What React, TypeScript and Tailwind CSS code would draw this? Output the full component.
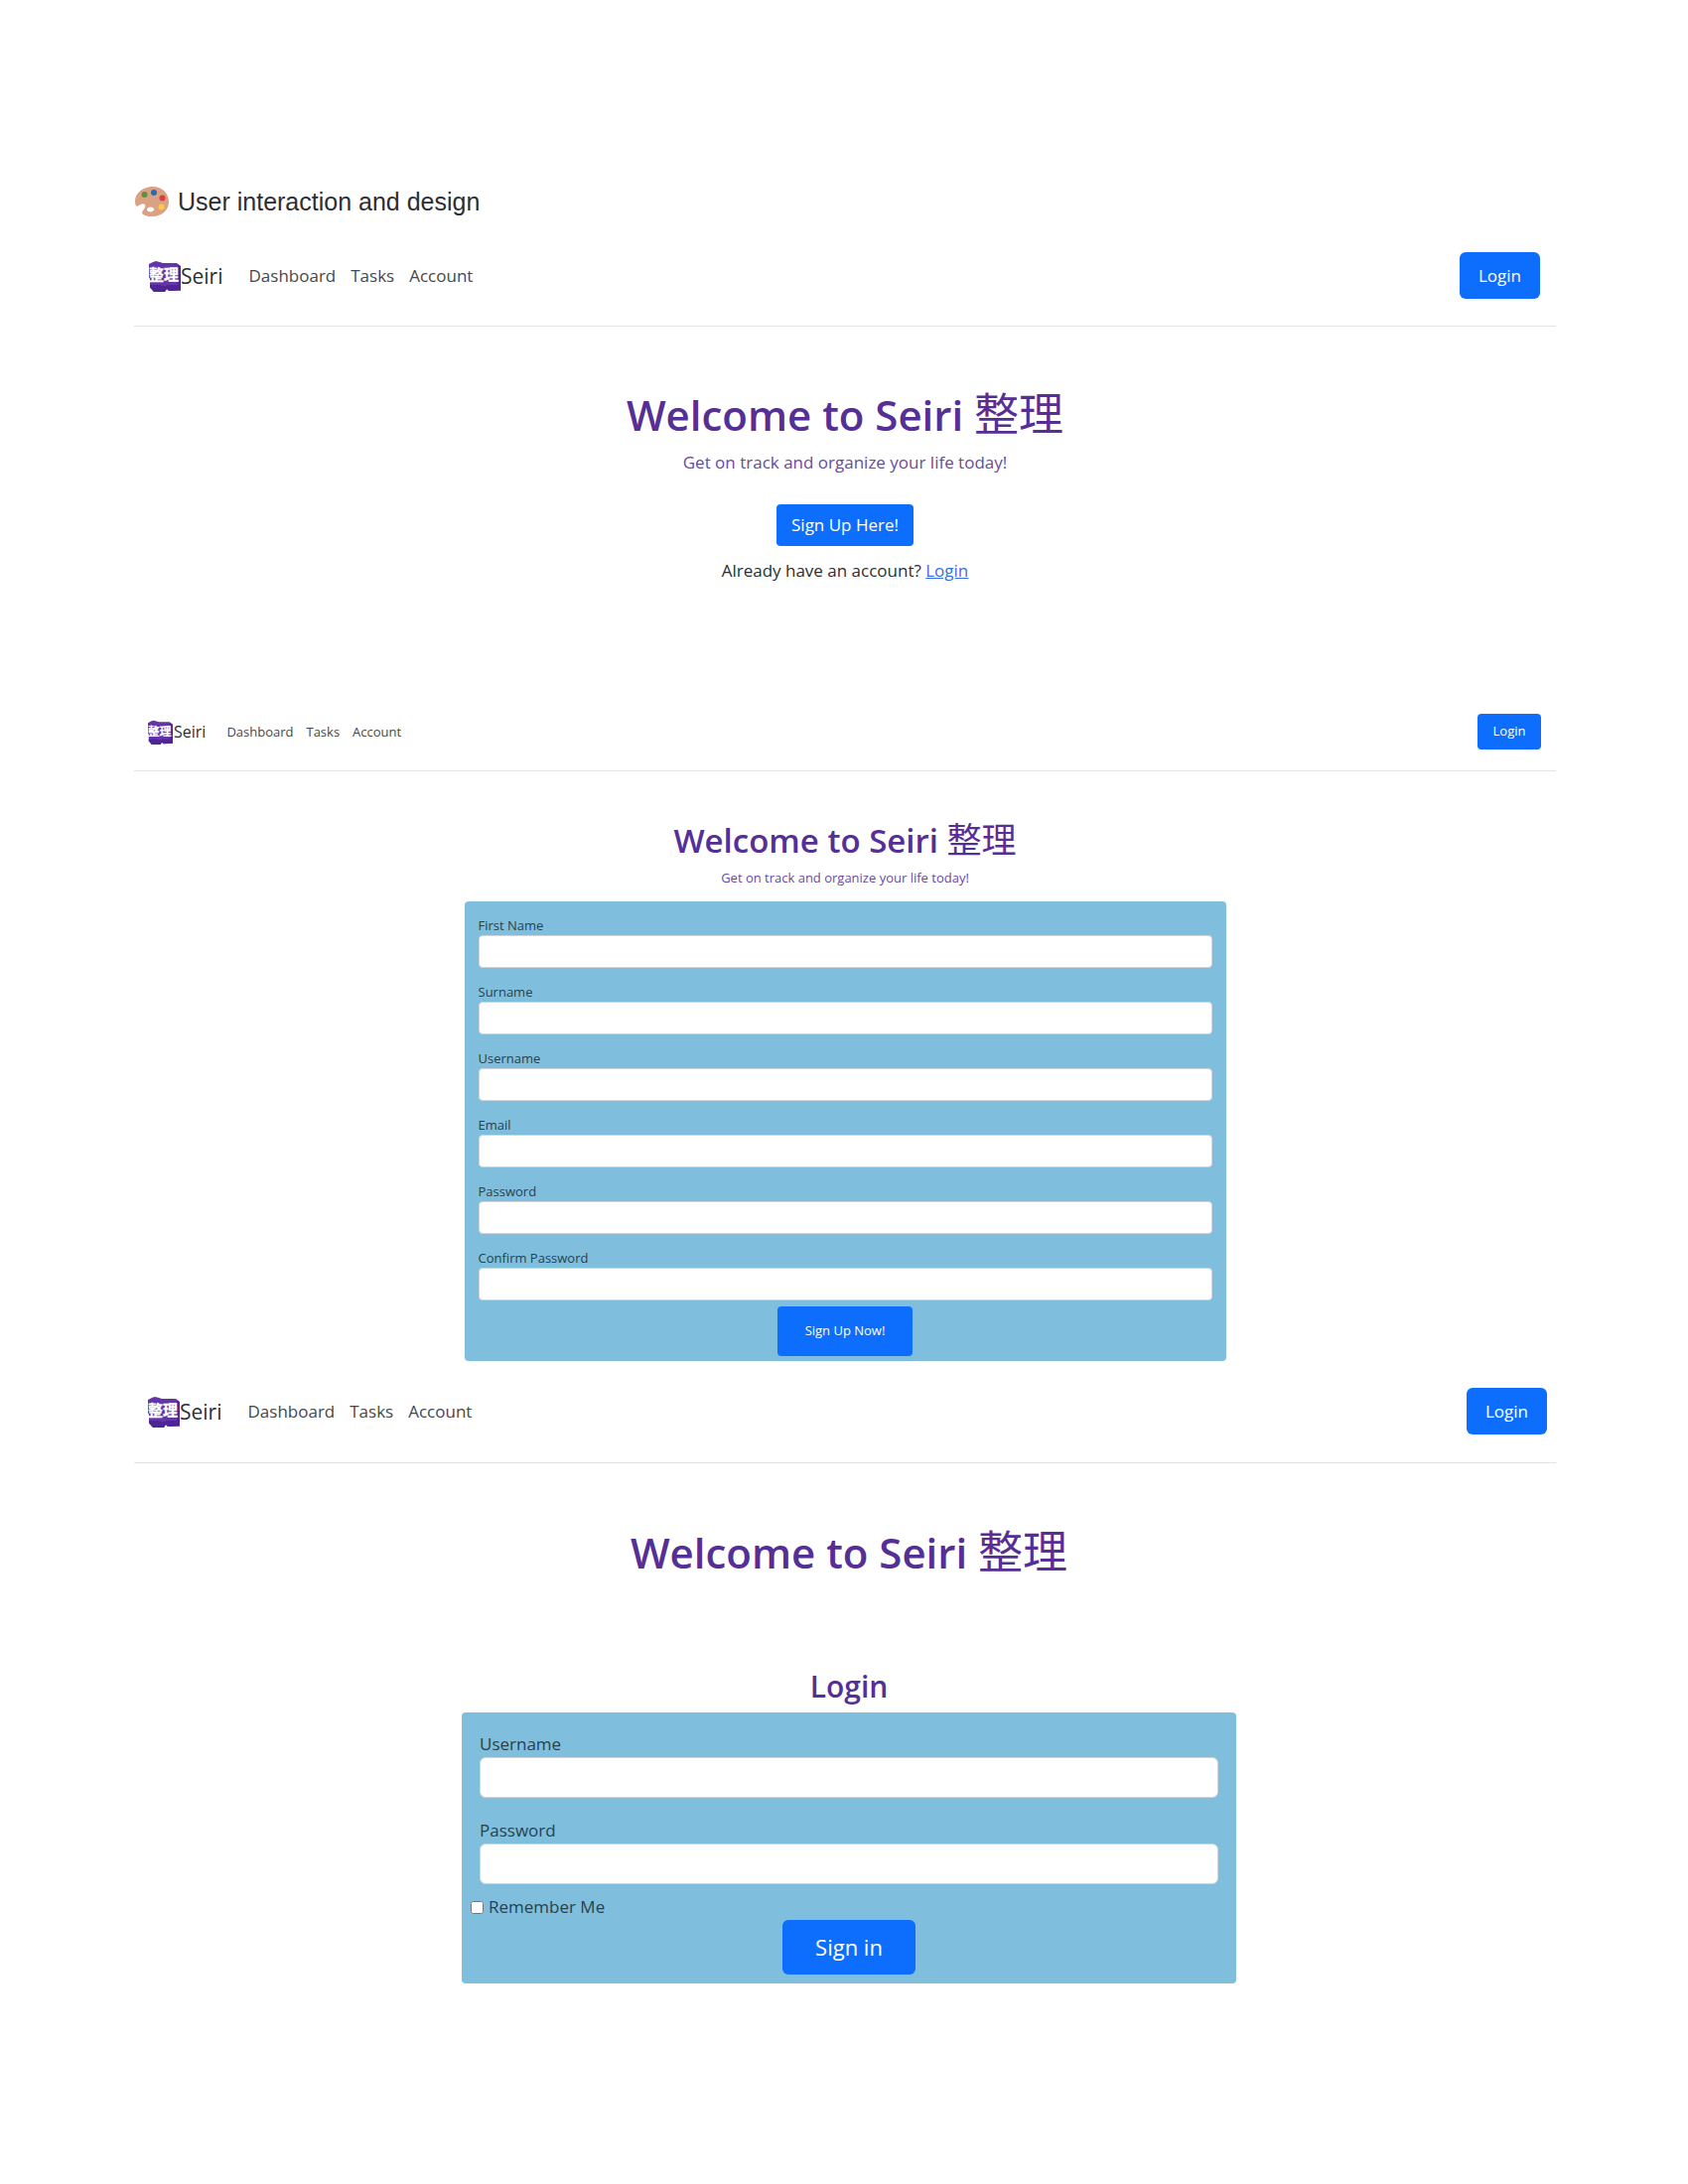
import React from "react";

function Palette() {
  return (
    <svg viewBox="0 0 36 32" className="h-8 w-9 shrink-0" aria-hidden="true">
      <path
        d="M19 1C9 1 1 7.500 1 15.500c0 2.500.6 5 1.700 5.200 1.600.3 3.600-2.600 6.300-2.400 2.600.2 2.900 2.500 1.600 4.500-1.200 1.900-3.100 3.700-2.300 5.100 1.200 2.100 5.900 3.100 10.200 3.100C28.300 31 35 24.500 35 16.300 35 7.500 28 1 19 1zm-2.500 25.400c-2.100 0-3.500-1-3.500-2.400s1.500-2.600 3.600-2.600 3.500 1 3.500 2.400-1.500 2.600-3.600 2.600z"
        fill="#dba183"
      />
      <circle cx="10.500" cy="9" r="3" fill="#5f9140" />
      <circle cx="20" cy="7" r="3" fill="#2e68ad" />
      <circle cx="28.500" cy="12.500" r="3" fill="#dd3b4a" />
      <circle cx="27.500" cy="21.500" r="3" fill="#fbc74d" />
    </svg>
  );
}

function Logo({ className }: { className: string }) {
  return (
    <svg viewBox="0 0 32 32" className={className} role="img" aria-label="整理">
      <path d="M0 4 4 2l3-1 4 1 3 1h14l4 3v24.500L20 31l-2-2-2 3H5l-4-4.500V19L0 17z" fill="#6236a8" />
      <path d="M1 25h11v1h6v-1h11V4.500l3 2v24L20 31l-2-2-2 3H5l-4-4.500z" fill="#4f2496" />
      <text
        x="0"
        y="20"
        fontSize="15"
        fontWeight="700"
        fill="#ffffff"
        stroke="#ffffff"
        strokeWidth="0.300"
        fontFamily="'Noto Sans CJK JP', sans-serif"
      >
        整理
      </text>
    </svg>
  );
}

function NavBar({ small = false, className }: { small?: boolean; className: string }) {
  return (
    <header className={`flex items-start justify-between border-b border-[#e2e3e5] ${className}`}>
      <nav className={small ? "flex h-[36px] items-center" : "flex h-[48px] items-center"}>
        <a href="#" className="flex items-center">
          <Logo className={small ? "size-[25px]" : "size-8"} />
          <span className={small ? "ml-px text-[16px] leading-6" : "text-[21px] leading-7"}>Seiri</span>
        </a>
        <div
          className={
            small
              ? "ml-[21px] flex gap-[13px] text-[13px] leading-5 text-[#44484c]"
              : "ml-[26px] flex gap-[15px] text-[17px] leading-6 text-[#44484c]"
          }
        >
          <a href="#">Dashboard</a>
          <a href="#">Tasks</a>
          <a href="#">Account</a>
        </div>
      </nav>
      <button
        type="button"
        className={
          small
            ? "h-[36px] w-16 rounded bg-[#0d6efd] text-[13px] text-white"
            : "h-[47px] w-[81px] rounded-md bg-[#0d6efd] text-[17px] text-white"
        }
      >
        Login
      </button>
    </header>
  );
}

function Title({ small = false }: { small?: boolean }) {
  return (
    <h1
      className={
        small
          ? "text-center text-[33px] leading-[44px] font-semibold text-[#552f95]"
          : "text-center text-[42px] leading-[56px] font-semibold text-[#552f95]"
      }
    >
      Welcome to Seiri{" "}
      <span className={small ? "text-[35px] leading-none font-normal" : "text-[45px] leading-none font-normal"}>
        整理
      </span>
    </h1>
  );
}

const signUpFields = [
  { id: "first-name", label: "First Name", type: "text" },
  { id: "surname", label: "Surname", type: "text" },
  { id: "username", label: "Username", type: "text" },
  { id: "email", label: "Email", type: "email" },
  { id: "password", label: "Password", type: "password" },
  { id: "confirm-password", label: "Confirm Password", type: "password" },
];

const loginFields = [
  { id: "login-username", label: "Username", type: "text" },
  { id: "login-password", label: "Password", type: "password" },
];

export default function App() {
  return (
    <main className="min-h-screen bg-white pt-[185px] pr-[133px] pb-16 pl-[135px] font-['Open_Sans','Noto_Sans_CJK_JP',sans-serif] text-[#2b2f33]">
      <h3 className="flex h-9 items-center gap-2 font-['Liberation_Sans',sans-serif] text-[25px] leading-9">
        <Palette />
        <span>User interaction and design</span>
      </h3>

      <section className="mt-[33px]">
        <NavBar className="pr-4 pb-[26px] pl-[15px]" />
        <div className="mt-[61px] flex flex-col items-center">
          <Title />
          <p className="mt-2 text-[17px] leading-6 text-[#6a4a9f]">Get on track and organize your life today!</p>
          <button type="button" className="mt-[30px] h-[42px] w-[138px] rounded bg-[#0d6efd] text-[17px] text-white">
            Sign Up Here!
          </button>
          <p className="mt-[13px] text-[17px] leading-6">
            Already have an account?{" "}
            <a href="#" className="text-[#2f74e0] underline">
              Login
            </a>
          </p>
        </div>
      </section>

      <section className="mt-[132px]">
        <NavBar small className="pr-[15px] pb-[21px] pl-[14px]" />
        <div className="mt-[48px] flex flex-col items-center">
          <Title small />
          <p className="mt-[5px] text-[13px] leading-5 text-[#6a4a9f]">Get on track and organize your life today!</p>
          <form className="mt-[14px] flex w-full max-w-[767px] flex-col rounded-sm bg-[#7fbedd] px-[14px] pt-[14px] pb-[5px]">
            <div className="flex flex-col gap-[14px]">
              {signUpFields.map((f) => (
                <div key={f.id} className="flex flex-col">
                  <label htmlFor={f.id} className="text-[13px] leading-5 text-[#27424f]">
                    {f.label}
                  </label>
                  <input
                    id={f.id}
                    type={f.type}
                    className="h-[33px] w-full rounded border border-[#ced4da] bg-white px-3 text-[13px]"
                  />
                </div>
              ))}
            </div>
            <button type="button" className="mt-[6px] h-[50px] w-[136px] self-center rounded bg-[#0d6efd] text-[13px] text-white">
              Sign Up Now!
            </button>
          </form>
        </div>
      </section>

      <section className="mt-[27px]">
        <NavBar className="pr-[9px] pb-[27px] pl-[14px]" />
        <div className="mt-[62px] flex flex-col items-center pl-2">
          <Title />
          <h2 className="mt-[87px] text-[30px] leading-10 font-semibold text-[#552f95]">Login</h2>
          <form className="mt-[6px] flex w-full max-w-[780px] flex-col rounded-sm bg-[#7fbedd] px-[18px] pt-[20px] pb-[9px]">
            <div className="flex flex-col gap-[21px]">
              {loginFields.map((f) => (
                <div key={f.id} className="flex flex-col gap-px">
                  <label htmlFor={f.id} className="text-[17px] leading-6 text-[#27424f]">
                    {f.label}
                  </label>
                  <input
                    id={f.id}
                    type={f.type}
                    className="h-[41px] w-full rounded-md border border-[#ced4da] bg-white px-4 text-[17px]"
                  />
                </div>
              ))}
            </div>
            <div className="mt-[11px] -ml-[9px] flex items-center gap-[5px]">
              <input id="remember" type="checkbox" className="size-[13px]" />
              <label htmlFor="remember" className="text-[17px] leading-6 text-[#27424f]">
                Remember Me
              </label>
            </div>
            <button type="button" className="mt-px h-[55px] w-[134px] self-center rounded-md bg-[#0d6efd] text-[22px] text-white">
              Sign in
            </button>
          </form>
        </div>
      </section>
    </main>
  );
}
